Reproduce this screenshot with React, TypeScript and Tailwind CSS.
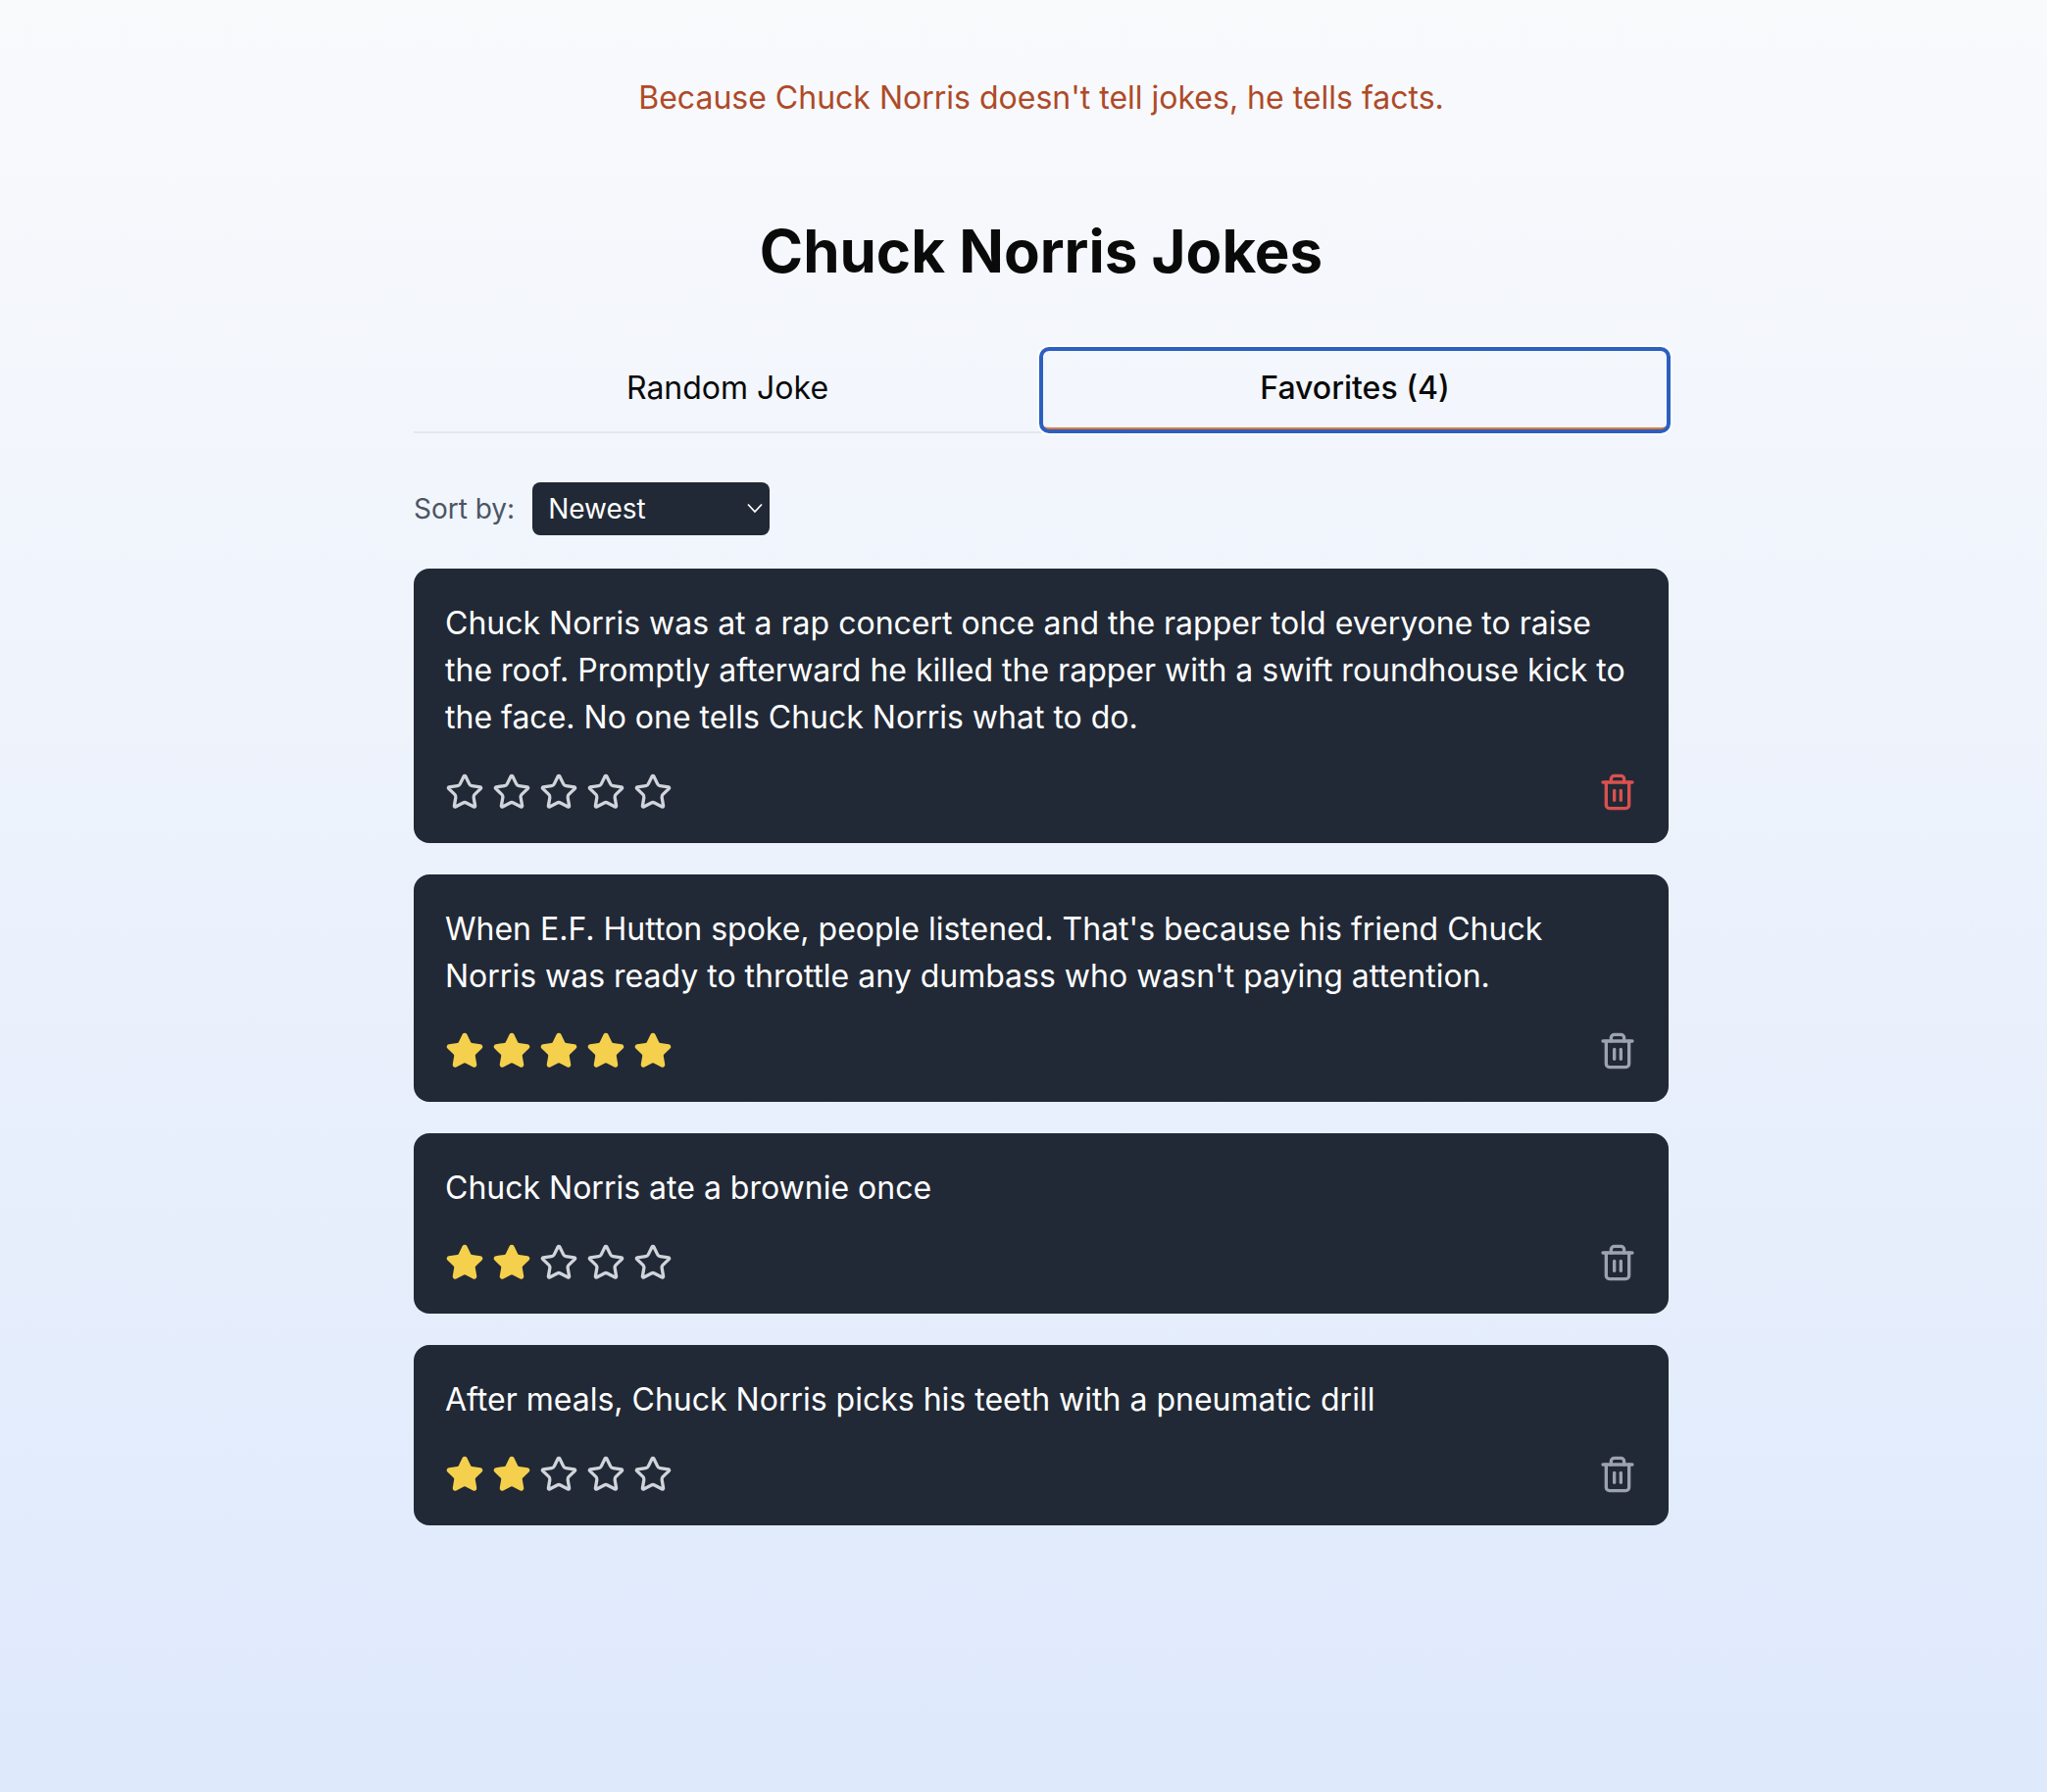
import { Star, Trash2 } from "lucide-react";

const jokes = [
  { text: "Chuck Norris was at a rap concert once and the rapper told everyone to raise the roof. Promptly afterward he killed the rapper with a swift roundhouse kick to the face. No one tells Chuck Norris what to do.", rating: 0, hot: true },
  { text: "When E.F. Hutton spoke, people listened. That's because his friend Chuck Norris was ready to throttle any dumbass who wasn't paying attention.", rating: 5, hot: false },
  { text: "Chuck Norris ate a brownie once", rating: 2, hot: false },
  { text: "After meals, Chuck Norris picks his teeth with a pneumatic drill", rating: 2, hot: false },
];

function Card({ text, rating, hot }: { text: string; rating: number; hot: boolean }) {
  return (
    <div className="rounded-2xl bg-[#212936] p-8 text-white">
      <p className="text-[32px] leading-[48px]">{text}</p>
      <div className="mt-8 flex items-center justify-between">
        <div className="flex gap-2">
          {[0, 1, 2, 3, 4].map((i) =>
            i < rating ? (
              <Star key={i} size={40} className="fill-[#f5d04c] text-[#f5d04c]" />
            ) : (
              <Star key={i} size={40} className="text-[#d1d5db]" />
            )
          )}
        </div>
        <Trash2 size={40} className={hot ? "text-[#d9514f]" : "text-[#9ca3af]"} />
      </div>
    </div>
  );
}

export default function App() {
  return (
    <div className="min-h-[1828px] bg-gradient-to-b from-[#f9fafc] to-[#dee9fc] pl-[422px] font-['Inter',sans-serif]">
      <div className="w-[1280px] pt-[76px]">
        <p className="text-center text-[32px] leading-[48px] text-[#ae4a27]">
          Because Chuck Norris doesn't tell jokes, he tells facts.
        </p>
        <h1 className="mt-24 text-center text-[60px] font-bold leading-[72px] text-[#0a0a0a]">Chuck Norris Jokes</h1>
        <div className="mt-16 flex border-b-2 border-[#e5e7eb]">
          <div className="flex-1 border-b-4 border-transparent py-4 text-center text-[32px] font-normal leading-[48px] text-[#0a0a0a]">
            Random Joke
          </div>
          <div className="flex-1 rounded-lg border-b-4 border-[#e0783f] py-4 text-center text-[32px] font-medium leading-[48px] text-[#0a0a0a] outline-4 -outline-offset-2 outline-[#2b5fc0] shadow-[0_0_0_4px_#ffffff]">
            Favorites (4)
          </div>
        </div>
        <div className="mt-[50px] flex items-center gap-[18px]">
          <span className="text-[28px] leading-10 text-[#4b5563]">Sort by:</span>
          <div className="relative">
            <select className="block h-[54px] w-[242px] appearance-none rounded-lg bg-[#212936] px-4 text-[28px] text-white">
              <option>Newest</option>
              <option>Oldest</option>
            </select>
            <svg className="pointer-events-none absolute right-[7px] top-[20px] h-3 w-4" viewBox="0 0 16 12" fill="none" stroke="#ffffff" strokeWidth="1.75">
              <path d="M1 2.5 8 10l7-7.5" />
            </svg>
          </div>
        </div>
        <div className="mt-[34px] flex flex-col gap-8">
          {jokes.map((j) => (
            <Card key={j.text} {...j} />
          ))}
        </div>
      </div>
    </div>
  );
}
